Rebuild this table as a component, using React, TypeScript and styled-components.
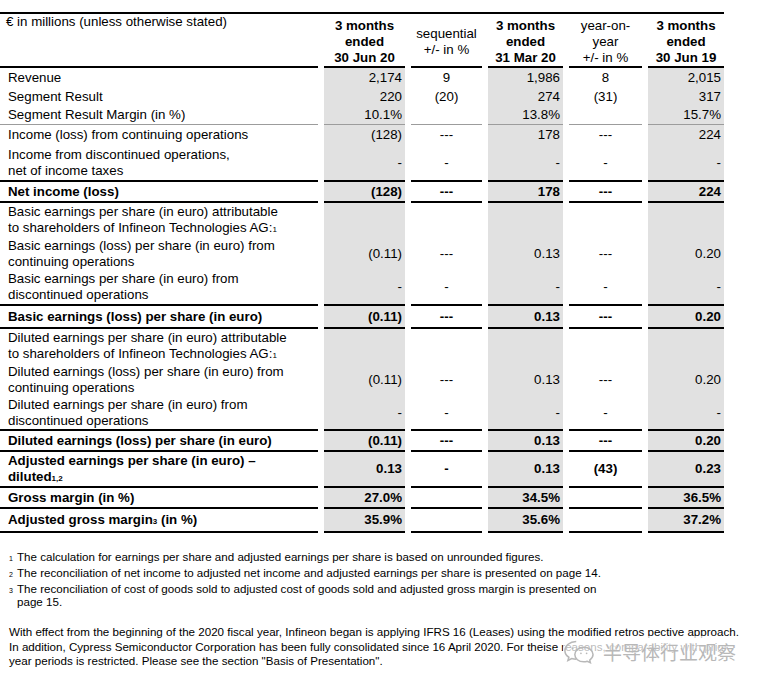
import React from 'react';
import styled, { createGlobalStyle } from 'styled-components';

const GlobalStyle = createGlobalStyle`
  html, body { margin: 0; padding: 0; background: #fff; }
  body { font-family: "Liberation Sans", Arial, sans-serif; color: #000; }
`;

const Page = styled.div`
  position: relative;
  width: 760px;
  height: 685px;
  overflow: hidden;
  padding-top: 12px;
  box-sizing: border-box;
`;

const Table = styled.div`
  width: 724px;
  border-top: 2px solid #000;
`;

const Row = styled.div`
  display: grid;
  grid-template-columns: 318px 81px 71px 75px 73px 76px;
  column-gap: 6px;
`;

type Line = 'none' | 'thin' | 'thick';
type Align = 'left' | 'right' | 'center';

const lineCss = (l: Line) =>
  l === 'thick' ? '2px solid #000' : l === 'thin' ? '1px solid #9c9c9c' : 'none';

const Cell = styled.div<{ $h: number; $line: Line; $shade?: boolean; $align: Align; $bold?: boolean }>`
  height: ${(p) => p.$h}px;
  display: flex;
  align-items: center;
  justify-content: ${(p) => (p.$align === 'left' ? 'flex-start' : p.$align === 'right' ? 'flex-end' : 'center')};
  text-align: ${(p) => p.$align};
  background: ${(p) => (p.$shade ? '#e1e1e1' : 'transparent')};
  border-bottom: ${(p) => lineCss(p.$line)};
  font-size: 13.3px;
  line-height: 16px;
  font-weight: ${(p) => (p.$bold ? 700 : 400)};
  padding: ${(p) => (p.$align === 'left' ? '0 0 0 8px' : p.$align === 'right' ? '0 3px 0 0' : '0')};
  white-space: nowrap;
`;

const HeadCell = styled.div<{ $bold?: boolean; $top?: boolean }>`
  height: ${(p) => (p.$top ? 52 : 49)}px;
  padding-top: ${(p) => (p.$top ? 0 : 3)}px;
  display: flex;
  flex-direction: column;
  justify-content: ${(p) => (p.$top ? 'flex-start' : 'center')};
  align-items: ${(p) => (p.$top ? 'flex-start' : 'center')};
  padding-left: ${(p) => (p.$top ? '6px' : '0')};
  border-bottom: 2px solid #000;
  font-size: 13.3px;
  line-height: 16px;
  font-weight: ${(p) => (p.$bold ? 700 : 400)};
  text-align: center;
  white-space: nowrap;
`;

const Sub = styled.span`
  font-size: 8px;
  line-height: 0;
`;

const Notes = styled.div`
  margin-top: 17px;
`;

const Note = styled.div`
  display: flex;
  align-items: baseline;
  padding-left: 9px;
  font-size: 11.6px;
  line-height: 13px;
  margin-bottom: 3px;
  white-space: nowrap;
`;

const NoteNum = styled.span`
  flex: 0 0 8px;
  font-size: 7px;
  line-height: 8px;
`;

const Para = styled.p`
  margin: 17px 0 0 0;
  padding-left: 9px;
  font-size: 11.6px;
  line-height: 14.5px;
  white-space: nowrap;
`;

const Watermark = styled.div`
  position: absolute;
  left: 563px;
  top: 636px;
  width: 184px;
  height: 30px;
  display: flex;
  align-items: center;
  gap: 6px;
  background: rgba(255, 255, 255, 0.72);
`;

const WmText = styled.span`
  font-family: "Noto Sans CJK SC", sans-serif;
  font-size: 19px;
  color: #b8b8b8;
  text-shadow: 0 0 1px #fff;
`;

type R = { label: React.ReactNode; vals: string[]; h: number; line: Line; bold?: boolean };

const dash = ['-', '-', '-', '-', '-'];
const empty = ['', '', '', '', ''];

const rows: R[] = [
  { label: 'Revenue', vals: ['2,174', '9', '1,986', '8', '2,015'], h: 19, line: 'none' },
  { label: 'Segment Result', vals: ['220', '(20)', '274', '(31)', '317'], h: 19, line: 'none' },
  { label: 'Segment Result Margin (in %)', vals: ['10.1%', '', '13.8%', '', '15.7%'], h: 18, line: 'thin' },
  { label: 'Income (loss) from continuing operations', vals: ['(128)', '---', '178', '---', '224'], h: 20, line: 'none' },
  { label: <>Income from discontinued operations,<br />net of income taxes</>, vals: dash, h: 35, line: 'thick' },
  { label: 'Net income (loss)', vals: ['(128)', '---', '178', '---', '224'], h: 19, line: 'thick', bold: true },
  { label: <>Basic earnings per share (in euro) attributable<br />to shareholders of Infineon Technologies AG:<Sub>1</Sub></>, vals: empty, h: 34, line: 'none' },
  { label: <>Basic earnings (loss) per share (in euro) from<br />continuing operations</>, vals: ['(0.11)', '---', '0.13', '---', '0.20'], h: 33, line: 'none' },
  { label: <>Basic earnings per share (in euro) from<br />discontinued operations</>, vals: dash, h: 34, line: 'thick' },
  { label: 'Basic earnings (loss) per share (in euro)', vals: ['(0.11)', '---', '0.13', '---', '0.20'], h: 21, line: 'thick', bold: true },
  { label: <>Diluted earnings per share (in euro) attributable<br />to shareholders of Infineon Technologies AG:<Sub>1</Sub></>, vals: empty, h: 34, line: 'none' },
  { label: <>Diluted earnings (loss) per share (in euro) from<br />continuing operations</>, vals: ['(0.11)', '---', '0.13', '---', '0.20'], h: 33, line: 'none' },
  { label: <>Diluted earnings per share (in euro) from<br />discontinued operations</>, vals: dash, h: 33, line: 'thick' },
  { label: 'Diluted earnings (loss) per share (in euro)', vals: ['(0.11)', '---', '0.13', '---', '0.20'], h: 19, line: 'thick', bold: true },
  { label: <>Adjusted earnings per share (in euro) –<br />diluted<Sub>1,2</Sub></>, vals: ['0.13', '-', '0.13', '(43)', '0.23'], h: 34, line: 'thick', bold: true },
  { label: 'Gross margin (in %)', vals: ['27.0%', '', '34.5%', '', '36.5%'], h: 19, line: 'thick', bold: true },
  { label: <>Adjusted gross margin<Sub>3</Sub> (in %)</>, vals: ['35.9%', '', '35.6%', '', '37.2%'], h: 22, line: 'thick', bold: true },
];

const WeChatIcon = () => (
  <svg width="34" height="26" viewBox="0 0 36 26" fill="none" stroke="#b8b8b8" strokeWidth="1.6">
    <path d="M14 3 C7 3 2 7.5 2 12.5 C2 15.5 3.6 18 6.2 19.6 L5.2 23 L9.2 20.9 C10.7 21.4 12.3 21.7 14 21.7" />
    <path d="M22 9 C16.5 9 12.5 12.6 12.5 16.8 C12.5 21 16.5 24.5 22 24.5 C23.3 24.5 24.6 24.3 25.7 23.9 L29 25.4 L28.3 22.6 C30.5 21.1 31.8 19.1 31.8 16.8 C31.8 12.6 27.5 9 22 9 Z" />
    <circle cx="10" cy="10" r="1" fill="#b8b8b8" stroke="none" />
    <circle cx="17.5" cy="10" r="1" fill="#b8b8b8" stroke="none" />
    <circle cx="19" cy="15.5" r="0.9" fill="#b8b8b8" stroke="none" />
    <circle cx="25" cy="15.5" r="0.9" fill="#b8b8b8" stroke="none" />
  </svg>
);

export default function App() {
  return (
    <>
      <GlobalStyle />
      <Page>
        <Table>
          <Row>
            <HeadCell $top>€ in millions (unless otherwise stated)</HeadCell>
            <HeadCell $bold>3 months<br />ended<br />30 Jun 20</HeadCell>
            <HeadCell>sequential<br />+/- in %</HeadCell>
            <HeadCell $bold>3 months<br />ended<br />31 Mar 20</HeadCell>
            <HeadCell>year-on-<br />year<br />+/- in %</HeadCell>
            <HeadCell $bold>3 months<br />ended<br />30 Jun 19</HeadCell>
          </Row>
          {rows.map((r, i) => (
            <Row key={i}>
              <Cell $h={r.h} $line={r.line} $align="left" $bold={r.bold}>
                <span>{r.label}</span>
              </Cell>
              {r.vals.map((v, j) => (
                <Cell
                  key={j}
                  $h={r.h}
                  $line={r.line}
                  $shade={j % 2 === 0}
                  $align={j % 2 === 0 ? 'right' : 'center'}
                  $bold={r.bold}
                >
                  {v}
                </Cell>
              ))}
            </Row>
          ))}
        </Table>
        <Notes>
          <Note><NoteNum>1</NoteNum><span>The calculation for earnings per share and adjusted earnings per share is based on unrounded figures.</span></Note>
          <Note><NoteNum>2</NoteNum><span>The reconciliation of net income to adjusted net income and adjusted earnings per share is presented on page 14.</span></Note>
          <Note><NoteNum>3</NoteNum><span>The reconciliation of cost of goods sold to adjusted cost of goods sold and adjusted gross margin is presented on<br />page 15.</span></Note>
        </Notes>
        <Para>
          With effect from the beginning of the 2020 fiscal year, Infineon began is applying IFRS 16 (Leases) using the modified retros pective approach.<br />
          In addition, Cypress Semiconductor Corporation has been fully consolidated since 16 April 2020. For theise reasons, comparability with prior<br />
          year periods is restricted. Please see the section "Basis of Presentation".
        </Para>
        <Watermark>
          <WeChatIcon />
          <WmText>半导体行业观察</WmText>
        </Watermark>
      </Page>
    </>
  );
}
